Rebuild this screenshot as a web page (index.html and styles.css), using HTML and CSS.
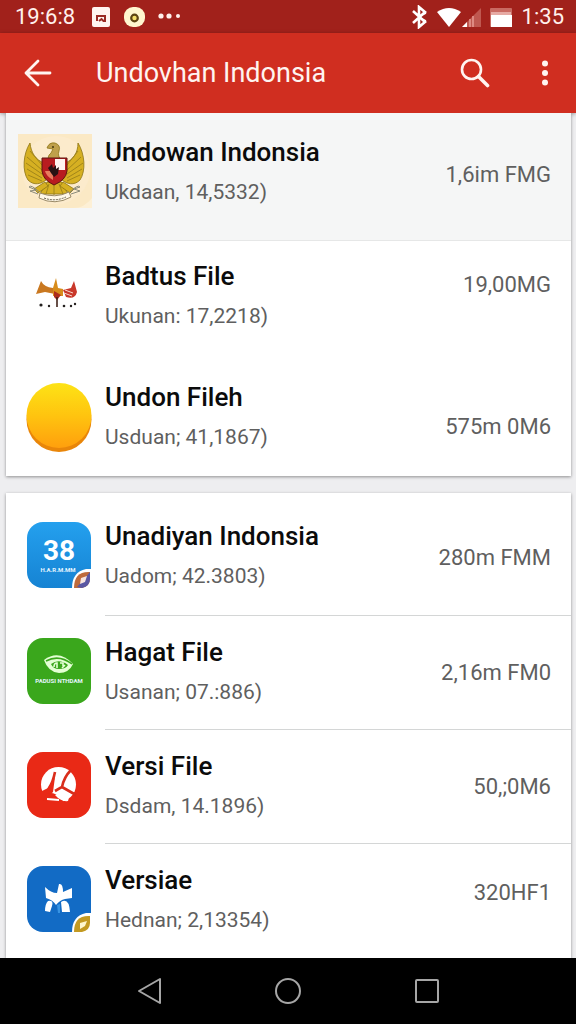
FILE: index.html
```html
<!DOCTYPE html>
<html lang="id">
<head>
<meta charset="utf-8">
<meta name="viewport" content="width=device-width, initial-scale=1">
<title>Undovhan Indonsia</title>
<link rel="stylesheet" href="styles.css">
</head>
<body>
<div class="screen">
  <div class="status">
    <span class="clock">19:6:8</span>
    <svg class="status-left" width="94" height="22" viewBox="0 0 94 22" aria-hidden="true">
      <rect x="1" y="1" width="18" height="20" rx="2" fill="#fff4f0"/>
      <path d="M6 15V10H14V15H12.500L10.500 13L8 15" fill="none" stroke="#9a2a24" stroke-width="2"/>
      <rect x="33" y="1" width="21" height="20" rx="9" fill="#fff6cf"/>
      <circle cx="43.500" cy="12" r="3.300" fill="#f5df6a" stroke="#5c4312" stroke-width="2.200"/>
      <g fill="#fff0ec"><circle cx="70" cy="10" r="2.600"/><circle cx="78" cy="10" r="2.600"/><circle cx="87" cy="10" r="2"/></g>
    </svg>
    <svg class="status-right" width="102" height="24" viewBox="0 0 102 24" aria-hidden="true">
      <path d="M2 6L14 17L8 22V2L14 7L2 18" fill="none" stroke="#fff" stroke-width="2.600"/>
      <path d="M11 10L15 8M11 14L15 16" stroke="#fff" stroke-width="1.500"/>
      <path d="M26 7Q38 -1 50 7L38 22Z" fill="#fff"/>
      <path d="M51 22L70 3V22Z" fill="#bf5850"/>
      <path d="M51 22L56 17V22Z" fill="#fff"/>
      <path d="M59 14V22M62 11V22" stroke="#e99b93" stroke-width="1.500"/>
      <rect x="79" y="3" width="22" height="19" rx="1" fill="#c96a62"/>
      <rect x="80" y="7" width="20" height="3" fill="#e6aaa4"/>
      <rect x="80" y="10" width="21" height="12" fill="#fff"/>
    </svg>
    <span class="clock">1:35</span>
  </div>
  <header class="appbar">
    <button class="icon-btn" aria-label="Kembali">
      <svg width="28" height="28" viewBox="0 0 28 28"><path d="M14 2L2 14L14 26M2 14H26" fill="none" stroke="#fff4f0" stroke-width="2.800" stroke-linecap="round" stroke-linejoin="round"/></svg>
    </button>
    <h1 class="appbar-title">Undovhan Indonsia</h1>
    <button class="icon-btn" aria-label="Cari">
      <svg width="30" height="30" viewBox="0 0 30 30"><circle cx="11.500" cy="11.500" r="9.500" fill="none" stroke="#fff4f0" stroke-width="2.600"/><path d="M18.500 18.500L27.500 27.500" stroke="#fff4f0" stroke-width="3.600" stroke-linecap="round"/></svg>
    </button>
    <button class="icon-btn" aria-label="Menu">
      <svg width="8" height="28" viewBox="0 0 8 28" fill="#fff4f0"><circle cx="4" cy="4.500" r="3"/><circle cx="4" cy="14" r="3"/><circle cx="4" cy="23.500" r="3"/></svg>
    </button>
  </header>
  <main class="content">
    <ul class="card">
      <li class="row row-selected">
        <svg class="icon emblem" viewBox="0 0 74 74" aria-hidden="true">
          <rect width="74" height="74" fill="#fbe9c5"/>
          <path d="M20 0H74V64Q66 74 56 74H74V0Z" fill="#fdf0d6"/>
          <circle cx="38" cy="36" r="34" fill="#fcebcc"/>
          <g fill="#d6b022" stroke="#8b7314" stroke-width=".8">
            <path d="M12 9C5 20 4 37 10 46C16 52 23 50 28 46L26 29C18 26 13 19 12 9Z"/>
            <path d="M60 9C67 20 68 37 62 46C56 52 49 50 44 46L47 29C55 26 60 19 60 9Z"/>
            <path d="M29 48L22 60H50L44 48Z"/>
            <path d="M27 48L16 55L20 59L30 52ZM45 48L56 55L52 59L42 52Z"/>
            <path d="M32 27Q28 23 33 19L35 15L29 14Q31 8 37 9Q43 11 41 17Q39 22 44 27Z" fill="#bfa04b"/>
          </g>
          <path d="M12 17L24 31M9 23L24 36M8 29L24 40M9 35L24 44M10 41L24 47M60 17L49 31M63 23L49 36M65 29L49 40M64 35L49 44M62 41L49 47M36 49V61M31 50L28 60M41 50L45 60" stroke="#9c8118" stroke-width=".9"/>
          <path d="M24 24H49V37Q48 46 36 51Q25 46 24 37Z" fill="#b81c20" stroke="#5c1511"/>
          <path d="M37 25H47V36H37Z" fill="#fff3ef"/>
          <path d="M27 37H35V46Q28 42 27 37Z" fill="#e87c5e"/>
          <path d="M30 34L34 30L35 34L38 31V35L41 33L40 40L36 43L33 39Z" fill="#291213"/>
          <circle cx="35" cy="13" r="1" fill="#46380d"/>
          <path d="M22 59Q37 65 51 58L53 63Q37 72 21 64Z" fill="#fff8e8" stroke="#9a8a67"/>
          <path d="M26 64Q37 68 48 63" fill="none" stroke="#67604d" stroke-dasharray="2 1"/>
          <path d="M21 58Q13 50 11 53L18 56L12 57L20 60M52 58Q60 50 62 53L56 55L62 57L53 60" fill="none" stroke="#8b8b7a"/>
        </svg>
        <div class="text"><h2 class="name">Undowan Indonsia</h2><p class="detail">Ukdaan, 14,5332)</p></div>
        <span class="size">1,6im FMG</span>
      </li>
      <li class="row row-upper">
        <svg class="icon" viewBox="0 0 66 66" aria-hidden="true">
          <path d="M10 32L15 19Q18 25 27 26L29 32L24 31L19 30Z" fill="#c97820"/>
          <path d="M30 16L32 26L37 27V34H27V26Z" fill="#d78c1b"/>
          <path d="M37 28L45 26L48 19L51 30Q49 38 40 35Z" fill="#c9382a"/>
          <path d="M28 29L35 33L31 38L28 35Z" fill="#ad2b1d"/>
          <path d="M38 31L46 34M39 28L47 31" stroke="#f8d9cc"/>
          <path d="M31 35V45" stroke="#42231b" stroke-width="1.600"/>
          <g fill="#24201f"><circle cx="15" cy="43" r="1.600"/><circle cx="23" cy="44" r="1.200"/><circle cx="38" cy="44" r="1.300"/><circle cx="45" cy="44" r="1.200"/><circle cx="49" cy="42" r="1.200"/></g>
        </svg>
        <div class="text"><h2 class="name">Badtus File</h2><p class="detail">Ukunan: 17,2218)</p></div>
        <span class="size">19,00MG</span>
      </li>
      <li class="row row-lower">
        <svg class="icon" viewBox="0 0 66 70" aria-hidden="true">
          <defs><linearGradient id="sun" x2="0" y2="1"><stop offset="0" stop-color="#fde316"/><stop offset=".5" stop-color="#ffc40f"/><stop offset="1" stop-color="#ff9f0d"/></linearGradient></defs>
          <circle cx="33" cy="36.500" r="32.500" fill="#e98609"/>
          <circle cx="33" cy="32.500" r="32.500" fill="url(#sun)"/>
        </svg>
        <div class="text"><h2 class="name">Undon Fileh</h2><p class="detail">Usduan; 41,1867)</p></div>
        <span class="size">575m 0M6</span>
      </li>
    </ul>
    <ul class="card card-apps">
      <li class="row row-first">
        <svg class="icon" viewBox="0 0 66 66" aria-hidden="true">
          <defs><linearGradient id="sky" x2="0" y2="1"><stop offset="0" stop-color="#24a0ee"/><stop offset="1" stop-color="#1683d3"/></linearGradient></defs>
          <rect x="1" width="64" height="66" rx="16" fill="url(#sky)"/>
          <text class="logo-number" x="33" y="38" text-anchor="middle">38</text>
          <text class="logo-caption" x="32" y="50" text-anchor="middle">H.A.R.M.MM</text>
          <path d="M66 47H60Q46 50 46 66H66Z" fill="#fff"/>
          <path d="M64 50Q48 49 48 66H56Q64 64 64 57Z" fill="#be6b3c"/>
          <path d="M64 50V57Q64 64 56 66L51 65L59 56Z" fill="#5a57a3"/>
          <path d="M55 56L61 54L59 60L54 62Z" fill="#f7e5e0"/>
        </svg>
        <div class="text"><h2 class="name">Unadiyan Indonsia</h2><p class="detail">Uadom; 42.3803)</p></div>
        <span class="size">280m FMM</span>
      </li>
      <li class="row">
        <svg class="icon" viewBox="0 0 66 66" aria-hidden="true">
          <rect x="1" width="64" height="66" rx="16" fill="#3aa71c"/>
          <path d="M18 22Q33 11 47 26Q43 35 33 35Q22 34 18 22Z" fill="#e4ffd5"/>
          <path d="M20 23Q33 16 46 26" fill="none" stroke="#3aa71c" stroke-width="1.500"/>
          <path d="M25 26Q33 20 42 27Q40 31 33 31Q27 31 25 26Z" fill="#3aa71c"/>
          <path d="M28 29Q28 25 31 25V30M34 25H37V28M36 30L39 27" fill="none" stroke="#e4ffd5" stroke-width="1.600"/>
          <text class="logo-caption" x="33" y="45" text-anchor="middle">PADUSI NTHDAM</text>
        </svg>
        <div class="text"><h2 class="name">Hagat File</h2><p class="detail">Usanan; 07.:886)</p></div>
        <span class="size">2,16m FM0</span>
      </li>
      <li class="row">
        <svg class="icon" viewBox="0 0 66 66" aria-hidden="true">
          <rect x="1" width="64" height="66" rx="16" fill="#e92916"/>
          <circle cx="32.500" cy="32.500" r="17.500" fill="#fff"/>
          <path d="M45 18Q38 25 36 35L29 39M36 35L50 43M29 20Q27 30 23 36L18 47" fill="none" stroke="#d92d1b" stroke-width="2.600"/>
          <path d="M29 25L27 40L22 45L17 49L14 40L22 36Z" fill="#e92916"/>
          <path d="M20 42Q28 39 34 46L41 52L31 52L17 48Z" fill="#e92916"/>
          <path d="M29 43L38 41Q44 44 42 49Q35 50 29 43Z" fill="#fff"/>
          <path d="M21 47L33 48" stroke="#fff" stroke-width="2"/>
        </svg>
        <div class="text"><h2 class="name">Versi File</h2><p class="detail">Dsdam, 14.1896)</p></div>
        <span class="size">50,;0M6</span>
      </li>
      <li class="row row-last">
        <svg class="icon" viewBox="0 0 66 66" aria-hidden="true">
          <rect x="1" width="64" height="66" rx="16" fill="#126bc5"/>
          <g fill="#fff">
            <path d="M19 21Q25 27 31 27L33 18Q37 17 37 26L46 22V32L39 33Q34 34 30 39Q27 34 20 32Z"/>
            <path d="M22 35Q28 34 26 40L24 46L19 45Q19 38 22 35ZM35 36Q43 31 44 46L36 46Z"/>
          </g>
          <path d="M31 39L34 38V47H32Z" fill="#3794e4"/>
          <path d="M66 47H60Q46 50 46 66H66Z" fill="#fff"/>
          <path d="M64 50Q48 49 48 66H56Q64 64 64 57Z" fill="#c39a22"/>
          <path d="M54 57L61 55L59 60L54 63Z" fill="#fff7ce"/>
        </svg>
        <div class="text"><h2 class="name">Versiae</h2><p class="detail">Hednan; 2,13354)</p></div>
        <span class="size">320HF1</span>
      </li>
    </ul>
  </main>
  <nav class="navbar" aria-label="Sistem">
    <button class="icon-btn" aria-label="Kembali"><svg width="28" height="28" viewBox="0 0 28 28"><path d="M25 2V26L4 14Z"/></svg></button>
    <button class="icon-btn" aria-label="Beranda"><svg width="28" height="28" viewBox="0 0 28 28"><circle cx="14" cy="14" r="12"/></svg></button>
    <button class="icon-btn" aria-label="Aplikasi terbaru"><svg width="28" height="28" viewBox="0 0 28 28"><rect x="3" y="3" width="22" height="22" rx="1"/></svg></button>
  </nav>
</div>
</body>
</html>
```
FILE: styles.css
```css
* { box-sizing: border-box; }
body { margin: 0; font-family: Roboto, "Liberation Sans", sans-serif; background: #eeeef0; }
h1, h2, p, ul { margin: 0; padding: 0; }
svg { display: block; flex: none; }

.screen { min-height: 100vh; display: flex; flex-direction: column; }

.status {
  display: flex;
  align-items: center;
  height: 33px;
  padding: 0 12px 0 15px;
  background: #a1211b;
  color: #fff0ec;
}
.clock { font-size: 22px; line-height: 33px; }
.status-left { margin-left: 16px; }
.status-right { margin: 0 9px 0 auto; }

.appbar {
  position: relative;
  display: flex;
  align-items: center;
  height: 80px;
  padding: 0 19px 0 14px;
  background: #d02e20;
  box-shadow: 0 1px 4px rgba(0, 0, 0, .35);
}
.appbar-title { flex: 1; margin-left: 34px; font-size: 27px; font-weight: 400; line-height: 40px; color: #fff4f0; }
.icon-btn {
  display: grid;
  place-items: center;
  min-width: 48px;
  height: 48px;
  padding: 0;
  border: 0;
  background: none;
}
.appbar .icon-btn:last-child { min-width: 24px; margin-left: 34px; }

.content { flex: 1; display: flex; flex-direction: column; gap: 17px; padding: 0 5px 0 6px; }
.card { list-style: none; background: #fff; box-shadow: 0 1px 3px rgba(0, 0, 0, .4); }
.card-apps { flex: 1; }

.row {
  position: relative;
  display: flex;
  gap: 13px;
  min-height: 114px;
  padding: 17px 20px 15px;
}
.row-selected { min-height: 128px; padding: 19px 20px 22px 12px; background: #f5f6f6; border-bottom: 1px solid #e6e7e7; }
.row-upper { min-height: 121px; padding-top: 15px; }
.row-lower { padding-top: 15px; padding-bottom: 4px; }
.row-first { min-height: 122px; padding-top: 23px; }

.card-apps .row + .row::before {
  content: "";
  position: absolute;
  top: 0;
  left: 99px;
  right: 0;
  border-top: 1px solid #d4d6d6;
}

.icon { width: 66px; height: 66px; margin-top: 6px; }
.row-lower .icon { height: 70px; }
.emblem { width: 74px; height: 74px; margin-top: 2px; }

.text { flex: 1; min-width: 0; }
.name { font-size: 26px; font-weight: 500; line-height: 40px; color: #0b0b0b; }
.detail { font-size: 21px; line-height: 40px; color: #5f5f5f; }
.size { align-self: center; font-size: 22px; line-height: 32px; color: #5f5f5f; }
.row-upper .size { align-self: flex-start; margin-top: 13px; }
.row-lower .size { margin-top: 4px; }
.row-last .size { align-self: flex-start; margin-top: 17px; }

.logo-number { font-size: 28px; font-weight: 700; fill: #fff; }
.logo-caption { font-size: 6px; font-weight: 700; fill: #e5f6ff; }

.navbar {
  display: flex;
  justify-content: center;
  align-items: center;
  gap: 91px;
  height: 66px;
  background: #000;
}
.navbar svg { fill: none; stroke: #a6a6a6; stroke-width: 2; stroke-linejoin: round; }
```
